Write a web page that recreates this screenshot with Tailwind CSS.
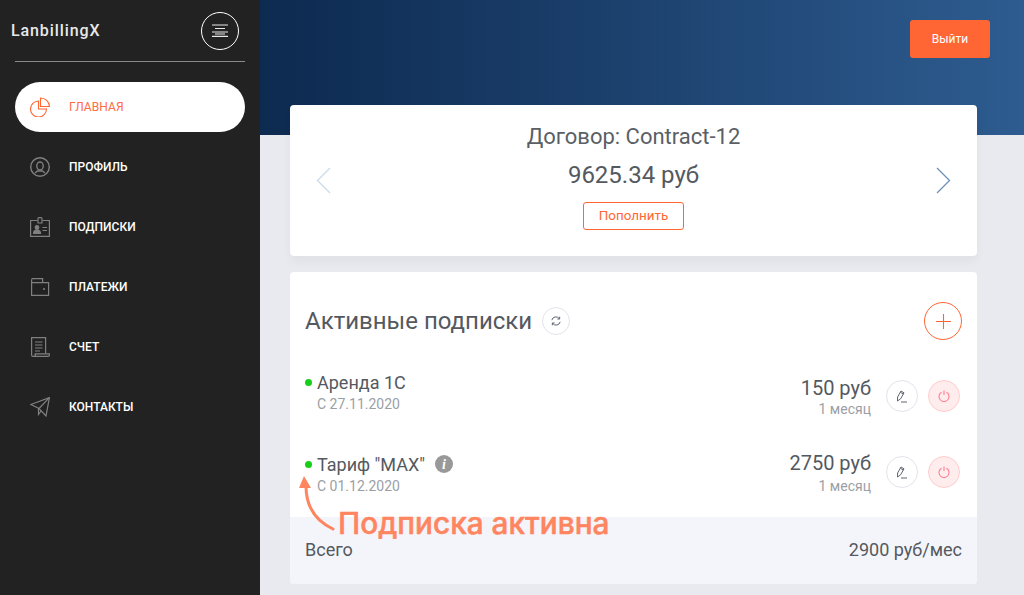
<!DOCTYPE html>
<html lang="en">
<head>
    <meta charset="UTF-8">
    <meta name="viewport" content="width=device-width, initial-scale=1.0">
    <title>LanbillingX</title>
    <script src="https://cdn.jsdelivr.net/npm/@tailwindcss/browser@4"></script>
</head>
<body class="font-['Roboto',sans-serif] bg-[#e9e9f0] h-[595px] w-[1024px] overflow-hidden flex">
    <!-- Sidebar -->
    <aside class="w-[260px] h-[595px] shrink-0 bg-[#222222] z-10">
        <div class="h-[62px] mx-[15px] border-b border-[#8a8a8a] flex items-center justify-between pr-[6px]">
            <span class="-ml-[4px] text-[#e8e8e8] text-[16px] font-medium tracking-[0.9px]">LanbillingX</span>
            <button class="w-[38px] h-[38px] rounded-full border border-white flex items-center justify-center">
                <svg class="w-[16px] h-[13px]" viewBox="0 0 16 13" stroke="#e8e8e8" stroke-width="1.2" fill="none">
                    <path d="M0 1H16M3 4.5H13M0 8H16M3 10H13M0 12.4H16"/>
                </svg>
            </button>
        </div>
        <nav class="mt-[20px] mx-[15px] flex flex-col">
            <a class="h-[50px] mb-[10px] rounded-full bg-white flex items-center pl-[15px] text-[#ff6b45] text-[12px] font-normal tracking-[0.1px]">
                <svg class="w-[20px] h-[20px] mr-[19px]" viewBox="0 0 20 20" fill="none" stroke="#ff6633" stroke-width="1.1">
                    <path d="M8.5 4A8 8 0 1 0 16.5 12H8.5Z"/>
                    <path d="M10.5 1V9.5H19.5A9 9 0 0 0 10.5 1Z"/>
                </svg>
                ГЛАВНАЯ
            </a>
            <a class="h-[50px] mb-[10px] flex items-center pl-[15px] text-white text-[12px] font-medium">
                <svg class="w-[20px] h-[20px] mr-[19px]" viewBox="0 0 20 20" fill="none" stroke="#808080" stroke-width="1.4">
                    <circle cx="10" cy="10" r="9.3"/>
                    <ellipse cx="10" cy="9" rx="3.2" ry="4"/>
                    <path d="M5 16L7.5 14H12.5L15 16"/>
                </svg>
                ПРОФИЛЬ
            </a>
            <a class="h-[50px] mb-[10px] flex items-center pl-[15px] text-white text-[12px] font-medium">
                <svg class="w-[20px] h-[20px] mr-[19px]" viewBox="0 0 20 20" fill="none" stroke="#808080" stroke-width="1.2">
                    <path d="M7.5 3.5H.6V19.4H19.4V3.5H12.5"/>
                    <path d="M8 6V1.6Q8 .6 9 .6H11Q12 .6 12 1.6V6Z"/>
                    <circle cx="7" cy="10.5" r="1.8" fill="#808080"/>
                    <path d="M3.5 16.5c0-3 2-3.3 3.5-3.3s3.5.3 3.5 3.3Z" fill="#808080"/>
                    <path d="M12.5 10.5H17M12.5 13.5H17"/>
                </svg>
                ПОДПИСКИ
            </a>
            <a class="h-[50px] mb-[10px] flex items-center pl-[15px] text-white text-[12px] font-medium">
                <svg class="w-[20px] h-[20px] mr-[19px]" viewBox="0 0 20 20" fill="none" stroke="#808080" stroke-width="1.2">
                    <path d="M1.6 2.6V18.4H18.6V5.6H1.6"/>
                    <path d="M1.6 2.6Q1.6 1.6 2.6 1.6H12.6V5.6"/>
                    <circle cx="14" cy="12" r="1" fill="#808080" stroke="none"/>
                </svg>
                ПЛАТЕЖИ
            </a>
            <a class="h-[50px] mb-[10px] flex items-center pl-[15px] text-white text-[12px] font-medium">
                <svg class="w-[20px] h-[20px] mr-[19px]" viewBox="0 0 20 20" fill="none" stroke="#808080" stroke-width="1.2">
                    <path d="M4 19.4H3Q1.6 19.4 1.6 18V.6H15.6V16.5"/>
                    <path d="M4.5 16.8H19.4V18Q19.4 19.4 18 19.4H4Q5.5 19.4 5.5 16.8"/>
                    <path d="M5 5H12.5M5 8H12.5M5 11H12.5M5 14H10"/>
                </svg>
                СЧЕТ
            </a>
            <a class="h-[50px] flex items-center pl-[15px] text-white text-[12px] font-medium">
                <svg class="w-[20px] h-[20px] mr-[19px]" viewBox="0 0 20 20" fill="none" stroke="#808080" stroke-width="1.2">
                    <path d="M.8 7.5L19.4.6L16 19L9 11.5Z"/>
                    <path d="M9 11.5L19.4.6M8.5 11V17.5L11 14"/>
                </svg>
                КОНТАКТЫ
            </a>
        </nav>
    </aside>

    <!-- Content -->
    <main class="relative flex-1 h-[595px] overflow-hidden">
        <div class="absolute inset-x-0 top-0 h-[135px] bg-gradient-to-r from-[#0d2a50] to-[#2e5c90]"></div>

        <div class="relative pl-[30px] pr-[47px]">
            <div class="h-[105px] flex items-start justify-end pt-[20px]">
                <button class="w-[80px] h-[38px] -mr-[13px] rounded-[3px] bg-[#ff6633] text-white text-[12px]">Выйти</button>
            </div>

            <!-- Contract card -->
            <section class="h-[151px] bg-white rounded-[4px] shadow-[0_6px_10px_rgba(0,0,0,0.04)] relative flex flex-col items-center">
                <h2 class="mt-[18px] text-[#5a5f66] text-[22px] leading-[28px]">Договор: Contract-12</h2>
                <p class="mt-[9px] text-[#54595f] text-[24px] leading-[30px]">9625.34 руб</p>
                <button class="mt-[12px] w-[101px] h-[28px] rounded-[3px] border border-[#ff6633] text-[#ff6633] text-[13.4px]">Пополнить</button>
                <svg class="absolute left-[26px] top-[62px] w-[15px] h-[27px]" viewBox="0 0 15 27" fill="none" stroke="#ccdaea" stroke-width="1.3">
                    <path d="M14 1L1.5 13.5L14 26"/>
                </svg>
                <svg class="absolute right-[26px] top-[62px] w-[15px] h-[27px]" viewBox="0 0 15 27" fill="none" stroke="#6e8fb8" stroke-width="1.3">
                    <path d="M1 1L13.5 13.5L1 26"/>
                </svg>
            </section>

            <!-- Subscriptions card -->
            <section class="mt-[16px] h-[312px] bg-white rounded-[4px] overflow-hidden flex flex-col">
                <div class="h-[98px] px-[15px] pt-[30px] flex items-start justify-between">
                    <div class="flex items-center h-[38px]">
                        <h2 class="text-[#54595f] text-[24px]">Активные подписки</h2>
                        <span class="ml-[10px] w-[28px] h-[28px] rounded-full border border-[#e3e3ec] flex items-center justify-center">
                            <svg class="w-[10px] h-[10px]" viewBox="0 0 12 12" fill="none" stroke="#5f6670" stroke-width="1.2">
                                <path d="M1 5A5 5 0 0 1 10 3.2M11 7A5 5 0 0 1 2 8.8"/>
                                <path d="M10.4 .8V3.6H7.6M1.6 11.2V8.4H4.4"/>
                            </svg>
                        </span>
                    </div>
                    <button class="w-[38px] h-[38px] rounded-full border border-[#ff6633] flex items-center justify-center">
                        <svg class="w-[15px] h-[15px]" viewBox="0 0 15 15" stroke="#ff6633" stroke-width="1.1"><path d="M7.5 0V15M0 7.5H15"/></svg>
                    </button>
                </div>

                <div class="h-[73px] pl-[15px] pr-[17px] flex justify-between">
                    <div>
                        <div class="flex items-center h-[24px] text-[#54595f] text-[18px]">
                            <span class="w-[7px] h-[7px] rounded-full bg-[#17cf17] mr-[5px]"></span>Аренда 1С
                        </div>
                        <div class="pl-[12px] mt-[1px] text-[#9b9fa5] text-[14px] leading-[18px]">С 27.11.2020</div>
                    </div>
                    <div class="flex">
                        <div class="text-right pt-[2px]">
                            <div class="h-[32px] leading-[32px] text-[#54595f] text-[20px]">150 руб</div>
                            <div class="text-[#9b9fa5] text-[14px] leading-[10px]">1 месяц</div>
                        </div>
                        <div class="ml-[15px] mt-[10px] flex gap-[10px]">
                            <span class="w-[32px] h-[32px] rounded-full border border-[#e3e3ec] flex items-center justify-center">
                                <svg class="w-[12px] h-[13px]" viewBox="0 0 12 13" fill="none" stroke="#5f6670" stroke-width="1"><path d="M1.5 11L1.6 7L5 1L8 2.8L4.6 8.8ZM4.3 2.2L7.3 4M5 12H11"/></svg>
                            </span>
                            <span class="w-[32px] h-[32px] rounded-full bg-[#ffecec] border border-[#ffcdcd] flex items-center justify-center">
                                <svg class="w-[12px] h-[12px]" viewBox="0 0 12 12" fill="none" stroke="#ff8095" stroke-width="1.1"><path d="M3.5 2.2A5 5 0 1 0 8.5 2.2M6 .5V5"/></svg>
                            </span>
                        </div>
                    </div>
                </div>

                <div class="h-[74px] pl-[15px] pr-[17px] flex justify-between">
                    <div class="pt-[9px]">
                        <div class="flex items-center h-[24px] text-[#54595f] text-[18px]">
                            <span class="w-[7px] h-[7px] rounded-full bg-[#17cf17] mr-[5px] mt-[1px]"></span>Тариф "MAX"
                            <span class="ml-[10px] w-[18px] h-[18px] rounded-full bg-[#999999] text-white text-[14px] font-bold italic font-['Liberation_Serif',serif] flex items-center justify-center">i</span>
                        </div>
                        <div class="pl-[12px] mt-[1px] text-[#9b9fa5] text-[14px] leading-[18px]">С 01.12.2020</div>
                    </div>
                    <div class="flex">
                        <div class="text-right">
                            <div class="h-[39px] leading-[40px] text-[#54595f] text-[20px]">2750 руб</div>
                            <div class="text-[#9b9fa5] text-[14px] leading-[8px]">1 месяц</div>
                        </div>
                        <div class="ml-[15px] mt-[13px] flex gap-[10px]">
                            <span class="w-[32px] h-[32px] rounded-full border border-[#e3e3ec] flex items-center justify-center">
                                <svg class="w-[12px] h-[13px]" viewBox="0 0 12 13" fill="none" stroke="#5f6670" stroke-width="1"><path d="M1.5 11L1.6 7L5 1L8 2.8L4.6 8.8ZM4.3 2.2L7.3 4M5 12H11"/></svg>
                            </span>
                            <span class="w-[32px] h-[32px] rounded-full bg-[#ffecec] border border-[#ffcdcd] flex items-center justify-center">
                                <svg class="w-[12px] h-[12px]" viewBox="0 0 12 12" fill="none" stroke="#ff8095" stroke-width="1.1"><path d="M3.5 2.2A5 5 0 1 0 8.5 2.2M6 .5V5"/></svg>
                            </span>
                        </div>
                    </div>
                </div>

                <div class="flex-1 bg-[#f4f5fa] px-[15px] pt-[23px] flex justify-between text-[#54595f] text-[18px] leading-[20px]">
                    <span>Всего</span>
                    <span>2900 руб/мес</span>
                </div>
            </section>
        </div>

        <!-- Annotation over the card -->
        <svg class="absolute left-[30px] top-[470px] w-[50px] h-[65px]" viewBox="0 0 50 65" fill="none">
            <path d="M16 16C16 35 24 50 43 59" stroke="#ff8560" stroke-width="3" stroke-linecap="round"/>
            <path d="M14 6L9 18H21Z" fill="#ff8560"/>
        </svg>
        <span class="absolute left-[78px] top-[503px] text-[#ff8560] text-[29.8px] leading-[40px] font-medium [-webkit-text-stroke:0.5px_#ff8560] font-['Inter',sans-serif]">Подписка активна</span>
    </main>
</body>
</html>
